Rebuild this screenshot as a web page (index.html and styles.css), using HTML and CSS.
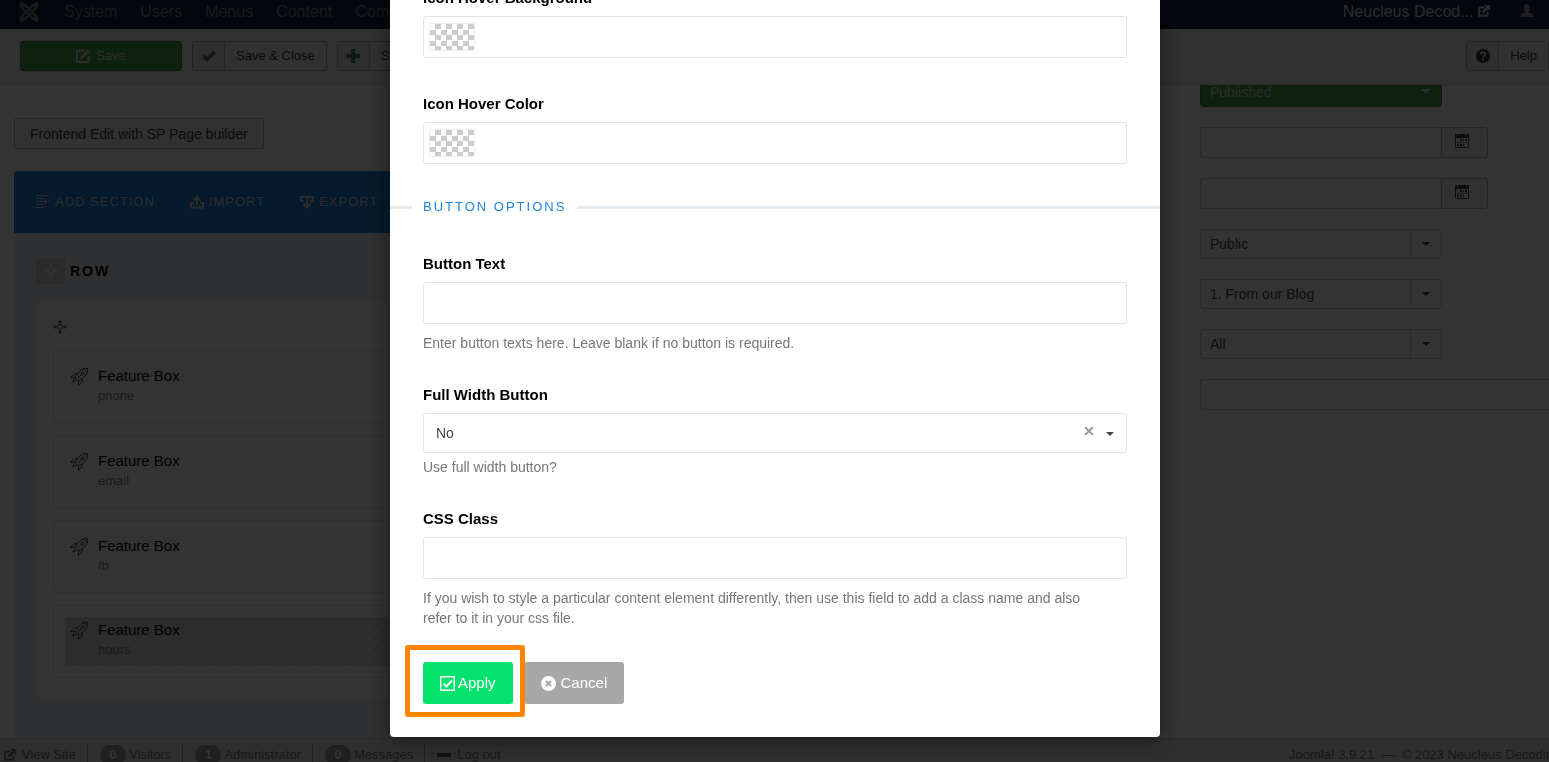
FILE: index.html
```html
<!DOCTYPE html>
<html lang="en">
<head>
    <meta charset="UTF-8">
    <meta name="viewport" content="width=device-width, initial-scale=1.0">
    <title>Edit Module - Neucleus Decoding</title>
    <link rel="stylesheet" href="styles.css">
</head>
<body>
    <!-- Shared icons -->
    <svg class="sprite" aria-hidden="true">
        <symbol id="i-external" viewBox="0 0 12 12">
            <path d="M6 2.500H1.200v8.300h8.300V7" fill="none" stroke="currentColor" stroke-width="2"/>
            <path d="M6 0h6v6l-2-2-4.500 4.500-2-2L8 2z" fill="currentColor"/>
        </symbol>
        <symbol id="i-edit" viewBox="0 0 14 14">
            <path d="M8 1.500H1v11.500h11.500V7" fill="none" stroke="currentColor" stroke-width="2"/>
            <path d="M4 10l.8-3L11.500.3l2.200 2.200L7 9.200z" fill="currentColor"/>
        </symbol>
        <symbol id="i-move" viewBox="0 0 14 14">
            <circle cx="7" cy="7" r="2.500" fill="none" stroke="currentColor"/>
            <path d="M7 1v3.500M7 9.500V13M1 7h3.500M9.500 7H13" stroke="currentColor"/>
            <path d="M7 0l2 2.500H5zM7 14l2-2.500H5zM0 7l2.500-2v4zM14 7l-2.500-2v4z" fill="currentColor"/>
        </symbol>
        <symbol id="i-rocket" viewBox="0 0 18 18">
            <g fill="none" stroke="currentColor" stroke-linejoin="round">
                <path d="M17.500.5h-3C12 1 9.500 3 7.500 5.500L5 9.500 8.500 13l4-2.500c2.500-2 4.500-4.500 5-7z"/>
                <path d="M7.500 5.500L4.500 6 .5 9.500 5 9.500M12.500 10.500L12 13.500l-3.500 4V13M5 10.500L2.500 14 7 12M13.500.8l3.700 3.700M8 10l3-3"/>
                <circle cx="12.500" cy="5.500" r="1.500"/>
            </g>
        </symbol>
        <symbol id="i-calendar" viewBox="0 0 14 14">
            <path d="M.5 1.500h13v12H.5z" fill="none" stroke="currentColor"/>
            <path d="M0 0h2v1h1V0h8v1h1V0h2v4H0zM5 5h2v2H5zM8 5h1v2H8zM10 5h2v2h-2zM2 8h2v1H2zM5 8h2v1H5zM8 8h1v1H8zM10 8h2v1h-2zM2 10h2v2H2zM5 10h2v2H5zM8 10h1v2H8z" fill="currentColor"/>
        </symbol>
    </svg>

    <nav class="navbar">
        <a class="brand" href="#" aria-label="Joomla">
            <svg width="20" height="20" viewBox="0 0 20 20" fill="none" stroke="currentColor" stroke-width="2.200">
                <path d="M2.500 5.500l12 12M5.500 2.500l12 12M17.500 5.500l-12 12M14.500 2.500l-12 12"/>
                <g fill="currentColor" stroke="none"><circle cx="3" cy="3" r="2.700"/><circle cx="17" cy="3" r="2.700"/><circle cx="3" cy="17" r="2.700"/><circle cx="17" cy="17" r="2.700"/></g>
            </svg>
        </a>
        <a href="#">System</a>
        <a href="#">Users</a>
        <a href="#">Menus</a>
        <a href="#">Content</a>
        <a href="#">Components</a>
        <a class="site-link" href="#">Neucleus Decod... <svg width="12" height="12"><use href="#i-external"/></svg></a>
        <a class="user-link" href="#" aria-label="User menu">
            <svg width="14" height="13" viewBox="0 0 14 13" fill="currentColor"><ellipse cx="7" cy="4" rx="3" ry="4"/><path d="M0 13c0-3 2-3.500 5.500-4.500V7h3v1.500C12 9.500 14 10 14 13z"/></svg>
        </a>
    </nav>

    <div class="subhead">
        <button class="btn btn-save" type="button"><svg width="14" height="14"><use href="#i-edit"/></svg>Save</button>
        <button class="btn btn-split" type="button">
            <span class="btn-icon green"><svg width="14" height="12" viewBox="0 0 14 12"><path d="M1.500 6l3.500 3.500L12.500 2" fill="none" stroke="currentColor" stroke-width="3.500"/></svg></span>
            <span class="btn-text">Save &amp; Close</span>
        </button>
        <button class="btn btn-split" type="button">
            <span class="btn-icon green"><svg width="14" height="14" viewBox="0 0 14 14"><path d="M7 0v14M0 7h14" stroke="currentColor" stroke-width="4"/></svg></span>
            <span class="btn-text">Save &amp; New</span>
        </button>
        <button class="btn btn-split btn-help" type="button">
            <span class="btn-icon"><svg width="14" height="14" viewBox="0 0 14 14"><circle cx="7" cy="7" r="7" fill="currentColor"/><path d="M4.800 5.500c0-3 4.500-2.800 4.500-.3C9.300 6.800 7 6.800 7 8.500M7 9.500v2" fill="none" stroke="#fff" stroke-width="1.700"/></svg></span>
            <span class="btn-text">Help</span>
        </button>
    </div>

    <main class="content">
        <section class="builder">
            <hr>
            <button class="btn btn-frontend" type="button">Frontend Edit with SP Page builder</button>
            <div class="toolbar">
                <a href="#"><svg width="14" height="14" viewBox="0 0 14 14" stroke="currentColor"><path d="M0 .5h13M0 3.500h8M0 6.500h6M0 9.500h8M0 12.500h8M9.500 3.500v7M6 6.500h7"/></svg>Add Section</a>
                <a href="#"><svg width="14" height="14" viewBox="0 0 14 14" fill="none" stroke="currentColor" stroke-width="2"><path d="M4 8H1v4.500h12V8h-3M7 10V4"/><path d="M7 0l4.500 5.500h-9z" fill="currentColor" stroke="none"/></svg>Import</a>
                <a href="#"><svg width="14" height="14" viewBox="0 0 14 14" fill="none" stroke="currentColor" stroke-width="2"><path d="M4 6H1V2h12v4h-3M7 4v6"/><path d="M7 14l5-5.500H2z" fill="currentColor" stroke="none"/></svg>Export</a>
            </div>
            <div class="page-rows">
                <div class="row-head">
                    <span class="row-handle"><svg width="14" height="14"><use href="#i-move"/></svg></span>
                    <strong>ROW</strong>
                </div>
                <div class="column">
                    <svg class="column-handle" width="14" height="14"><use href="#i-move"/></svg>
                    <div class="addon"><div class="addon-inner"><svg width="18" height="18"><use href="#i-rocket"/></svg><div><h4>Feature Box</h4><p>phone</p></div></div></div>
                    <div class="addon"><div class="addon-inner"><svg width="18" height="18"><use href="#i-rocket"/></svg><div><h4>Feature Box</h4><p>email</p></div></div></div>
                    <div class="addon"><div class="addon-inner"><svg width="18" height="18"><use href="#i-rocket"/></svg><div><h4>Feature Box</h4><p>fb</p></div></div></div>
                    <div class="addon disabled"><div class="addon-inner"><svg width="18" height="18"><use href="#i-rocket"/></svg><div><h4>Feature Box</h4><p>hours</p></div></div></div>
                </div>
            </div>
        </section>

        <aside class="options">
            <div class="select published">
                <select aria-label="Status"><option>Published</option></select>
                <span class="caret-box"></span>
            </div>
            <div class="date-field">
                <input type="text" aria-label="Start Publishing">
                <button type="button" aria-label="Open the calendar"><svg width="14" height="14"><use href="#i-calendar"/></svg></button>
            </div>
            <div class="date-field">
                <input type="text" aria-label="Finish Publishing">
                <button type="button" aria-label="Open the calendar"><svg width="14" height="14"><use href="#i-calendar"/></svg></button>
            </div>
            <div class="select">
                <select aria-label="Access"><option>Public</option></select>
                <span class="caret-box"></span>
            </div>
            <div class="select">
                <select aria-label="Ordering"><option>1. From our Blog</option></select>
                <span class="caret-box"></span>
            </div>
            <div class="select">
                <select aria-label="Language"><option>All</option></select>
                <span class="caret-box"></span>
            </div>
            <input class="note" type="text" aria-label="Note">
        </aside>
    </main>

    <footer class="status">
        <a href="#"><svg width="12" height="12"><use href="#i-external"/></svg>View Site</a>
        <span><b>0</b>Visitors</span>
        <span><b>1</b>Administrator</span>
        <a href="#"><b>0</b>Messages</a>
        <a href="#"><i class="minus"></i>Log out</a>
        <p>Joomla! 3.9.21 &nbsp;&mdash;&nbsp; &copy; 2023 Neucleus Decoding</p>
    </footer>

    <div class="overlay">
        <form class="modal" role="dialog" aria-label="Feature Box options" onsubmit="return false">
            <div class="form-group">
                <label for="hover-bg">Icon Hover Background</label>
                <div class="color-field">
                    <input type="text" id="hover-bg">
                    <button class="swatch" type="button" aria-label="Pick icon hover background"></button>
                </div>
            </div>
            <div class="form-group color-group">
                <label for="hover-color">Icon Hover Color</label>
                <div class="color-field">
                    <input type="text" id="hover-color">
                    <button class="swatch" type="button" aria-label="Pick icon hover color"></button>
                </div>
            </div>

            <h3 class="separator">Button Options</h3>

            <div class="form-group">
                <label for="btn-text">Button Text</label>
                <input type="text" id="btn-text">
                <p class="help">Enter button texts here. Leave blank if no button is required.</p>
            </div>
            <div class="form-group">
                <label for="btn-full">Full Width Button</label>
                <div class="chosen">
                    <select id="btn-full"><option>No</option><option>Yes</option></select>
                    <button class="clear" type="button" aria-label="Clear"><svg width="10" height="8" viewBox="0 0 10 8"><path d="M1 0l8 8M9 0L1 8" stroke="currentColor" stroke-width="2"/></svg></button>
                </div>
                <p class="help">Use full width button?</p>
            </div>
            <div class="form-group">
                <label for="css-class">CSS Class</label>
                <input type="text" id="css-class">
                <p class="help">If you wish to style a particular content element differently, then use this field to add a class name and also refer to it in your css file.</p>
            </div>

            <div class="actions">
                <div class="highlight">
                    <button class="apply" type="submit"><svg width="15" height="15" viewBox="0 0 15 15" fill="none" stroke="currentColor"><path d="M.7.700h13.600v13.600H.7z" stroke-width="1.400"/><path d="M3.500 7.500l3 3 5.500-6" stroke-width="2"/></svg>Apply</button>
                </div>
                <button class="cancel" type="button"><svg width="15" height="15" viewBox="0 0 15 15"><circle cx="7.500" cy="7.500" r="7.500" fill="currentColor"/><path d="M5 5l5 5M10 5l-5 5" stroke="#a7a7a7" stroke-width="2"/></svg>Cancel</button>
            </div>
        </form>
    </div>
</body>
</html>
```

FILE: styles.css
```css
* {
    box-sizing: border-box;
}
body {
    display: flex;
    flex-direction: column;
    height: 100vh;
    margin: 0;
    overflow: hidden;
    background: #fff;
    color: #444;
    font-family: Arial, "Liberation Sans", sans-serif;
    font-size: 14px;
    line-height: 20px;
}
a {
    color: inherit;
    text-decoration: none;
}
button, input, select {
    margin: 0;
    font: inherit;
    color: inherit;
}
svg {
    flex: none;
}
h3, h4, p {
    margin: 0;
    font-weight: normal;
}
.sprite {
    position: absolute;
    width: 0;
    height: 0;
}

/* Top bar */
.navbar {
    flex: none;
    display: flex;
    gap: 23px;
    height: 29px;
    padding: 2px 15px 0 19px;
    background: #10223e;
    color: #808488;
    font-size: 16px;
}
.brand {
    width: 22px;
}
.brand svg {
    display: block;
}
.site-link {
    margin-left: auto;
    color: #d9d9d9;
}
.user-link {
    margin-left: 7px;
    padding-top: 2px;
    line-height: 1;
    color: #999;
}

/* Toolbar */
.subhead {
    flex: none;
    display: flex;
    gap: 10px;
    height: 56px;
    padding: 12px 0 0 20px;
    background: #f2f2f2;
    border-bottom: 1px solid #dadada;
    font-size: 13px;
}
.btn {
    display: flex;
    align-items: center;
    height: 30px;
    padding: 0;
    background: #f3f3f3;
    border: 1px solid #b3b3b3;
    border-radius: 3px;
    color: #333;
    white-space: nowrap;
}
.btn-save {
    justify-content: center;
    gap: 6px;
    width: 162px;
    background: #46a546;
    border-color: #378137;
    color: #ddd;
}
.btn-icon {
    display: flex;
    align-items: center;
    justify-content: center;
    width: 32px;
    height: 28px;
    background: #e8e8e8;
    border-right: 1px solid #b3b3b3;
}
.btn-icon.green {
    color: #378137;
}
.btn-text {
    padding: 0 11px;
}
.btn-help {
    margin-left: auto;
}

/* Builder */
.content {
    flex: 1;
    display: flex;
    min-height: 0;
    overflow: hidden;
}
.builder {
    flex: 1;
    min-width: 0;
    padding: 12px 60px 0 14px;
}
.builder hr {
    margin: 0 0 20px;
    border: 0;
    border-top: 1px solid #eee;
}
.btn-frontend {
    height: 31px;
    padding: 0 15px;
}
.toolbar {
    display: flex;
    gap: 35px;
    align-items: center;
    height: 62px;
    margin-top: 22px;
    padding: 0 22px;
    background: #2184de;
    border-radius: 3px 3px 0 0;
    color: #ddd;
    font-size: 13px;
    letter-spacing: 1px;
    text-transform: uppercase;
}
.toolbar a {
    display: flex;
    align-items: center;
    gap: 5px;
}
.page-rows {
    padding: 25px 22px 60px;
    background: #ebeff2;
}
.row-head {
    display: flex;
    align-items: center;
    gap: 5px;
    height: 26px;
    color: #000;
    letter-spacing: 2px;
}
.row-handle {
    display: flex;
    align-items: center;
    justify-content: center;
    width: 29px;
    height: 26px;
    background: #cfcfcf;
    border-radius: 3px;
    color: #fff;
}
.column {
    margin-top: 18px;
    padding: 18px 17px 21px;
    background: #fff;
    border-radius: 3px;
}
.column-handle {
    display: block;
    margin: 0 0 16px;
}
.addon {
    height: 73px;
    margin-bottom: 12px;
    padding: 11px;
    border: 1px solid #e3e3e3;
    border-radius: 3px;
}
.addon:last-child {
    margin-bottom: 0;
}
.addon-inner {
    display: flex;
    gap: 10px;
    height: 49px;
    padding: 4px 5px;
    border-radius: 3px;
}
.addon-inner svg {
    margin-top: 2px;
}
.addon h4 {
    color: #000;
    font-size: 15px;
}
.addon p {
    color: #888;
    font-size: 13px;
}
.addon.disabled .addon-inner {
    padding-top: 3px;
    background: repeating-linear-gradient(135deg, #d9d9d9 0 4px, #e2e2e2 4px 8px);
}

/* Module options */
.options {
    flex: none;
    width: 349px;
    margin-top: -9px;
}
.select {
    position: relative;
    width: 242px;
    height: 30px;
    margin-bottom: 20px;
}
.select select {
    width: 100%;
    height: 100%;
    padding: 0 40px 0 9px;
    appearance: none;
    background: #fff;
    border: 1px solid #ccc;
    border-radius: 3px;
}
.caret-box {
    position: absolute;
    top: 1px;
    right: 1px;
    bottom: 1px;
    display: flex;
    align-items: center;
    justify-content: center;
    width: 31px;
    border-left: 1px solid #ccc;
    pointer-events: none;
}
.caret-box::after,
.chosen::after {
    content: "";
    border: 4px solid transparent;
    border-top-color: currentColor;
    border-bottom: 0;
}
.published {
    height: 31px;
    color: #ddd;
}
.published select {
    background: #46a546;
    border-color: #378137;
}
.published .caret-box {
    border-left: 0;
}
.published .caret-box::after {
    border-width: 5px 5px 0;
}
.date-field {
    display: flex;
    width: 288px;
    height: 31px;
    margin-bottom: 20px;
}
.date-field input {
    flex: 1;
    min-width: 0;
    background: #fff;
    border: 1px solid #ccc;
    border-radius: 3px 0 0 3px;
}
.date-field button {
    width: 47px;
    margin-left: -1px;
    padding: 0 5px 0 0;
    background: #f3f3f3;
    border: 1px solid #b3b3b3;
    border-radius: 0 3px 3px 0;
}
.note {
    width: 100%;
    height: 31px;
    background: #fff;
    border: 1px solid #ccc;
    border-right: 0;
    border-radius: 3px 0 0 3px;
}

/* Status bar */
.status {
    flex: none;
    display: flex;
    height: 24px;
    padding: 6px 0 0 4px;
    overflow: hidden;
    background: #ebebeb;
    border-top: 1px solid #d4d4d4;
    color: #777;
    font-size: 13px;
    white-space: nowrap;
}
.status a,
.status span {
    display: flex;
    align-items: center;
    height: 20px;
    margin-right: 12px;
    padding-right: 11px;
    border-right: 1px solid #999;
}
.status a:nth-of-type(3) {
    border: 0;
}
.status svg,
.status .minus {
    margin-right: 6px;
}
.status b {
    width: 26px;
    height: 20px;
    margin-right: 3px;
    background: #999;
    border-radius: 10px;
    color: #fff;
    text-align: center;
}
.status .minus {
    width: 14px;
    height: 4px;
    background: #555;
}
.status p {
    width: 260px;
    margin-left: auto;
    overflow: hidden;
}

/* Options modal */
.overlay {
    position: fixed;
    inset: 0;
    display: flex;
    align-items: flex-end;
    justify-content: center;
    padding: 0 0 25px 1px;
    overflow: hidden;
    background: rgba(0, 0, 0, 0.8);
}
.modal {
    width: 100%;
    max-width: 770px;
    padding: 33px;
    background: #fff;
    border-radius: 4px;
    box-shadow: 0 3px 25px rgba(0, 0, 0, 0.5);
}
.form-group {
    margin-bottom: 32px;
}
.form-group label {
    display: block;
    margin-bottom: 8px;
    color: #000;
    font-size: 15px;
    font-weight: bold;
}
.modal input,
.modal select {
    display: block;
    width: 100%;
    height: 42px;
    padding: 0 12px;
    background: #fff;
    border: 1px solid #e3e3e3;
    border-radius: 3px;
}
.color-field,
.chosen {
    position: relative;
}
.color-group {
    margin-top: 36px;
}
.swatch {
    position: absolute;
    top: 7px;
    left: 6px;
    width: 46px;
    height: 28px;
    padding: 0;
    background: repeating-conic-gradient(#ccc 0 25%, #fff 0 50%) 0 0 / 11px 11px;
    border: 1px solid #eee;
    border-radius: 2px;
}
.separator {
    display: flex;
    align-items: center;
    gap: 11px;
    margin: 33px -33px 37px;
    color: #2184de;
    font-size: 13px;
    letter-spacing: 2px;
    text-transform: uppercase;
}
.separator::before,
.separator::after {
    content: "";
    width: 22px;
    height: 3px;
    background: #e5eaee;
}
.separator::after {
    flex: 1;
}
.modal .chosen select {
    height: 40px;
    appearance: none;
}
.chosen::after {
    position: absolute;
    top: 19px;
    right: 13px;
    pointer-events: none;
}
.clear {
    position: absolute;
    top: 14px;
    right: 33px;
    padding: 0;
    background: none;
    border: 0;
    color: #999;
    line-height: 1;
}
.clear svg {
    display: block;
}
.help {
    margin-top: 9px;
    padding-right: 20px;
    color: #777;
}
.chosen + .help {
    margin-top: 4px;
}
.actions {
    display: flex;
    gap: 11px;
    margin-top: 34px;
}
.actions button {
    display: flex;
    align-items: center;
    gap: 3px;
    height: 42px;
    padding: 0 17px;
    border: 0;
    border-radius: 3px;
    color: #fff;
    font-size: 15px;
}
.actions .apply {
    background: #03e26c;
}
.actions .cancel {
    gap: 5px;
    background: #a7a7a7;
}
.highlight {
    position: relative;
}
.highlight::after {
    content: "";
    position: absolute;
    inset: -17px -12px -13px -18px;
    border: 5px solid #ff8400;
    border-radius: 3px;
    pointer-events: none;
}
```
